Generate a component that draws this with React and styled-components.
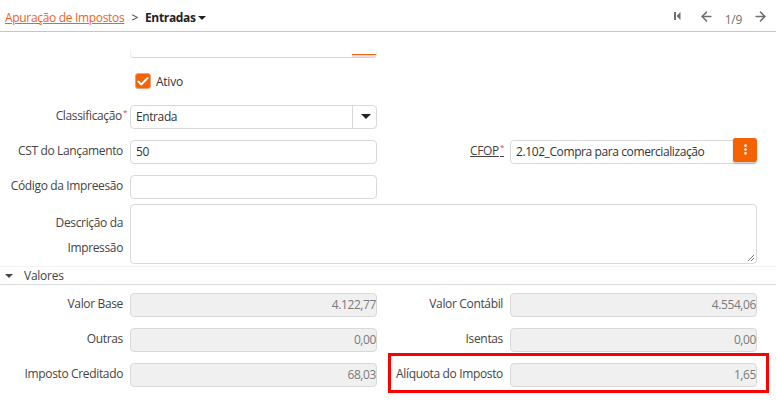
import React from "react";
import styled, { createGlobalStyle } from "styled-components";
import { Check, EllipsisVertical, ArrowLeft, ArrowRight } from "lucide-react";

const GlobalStyle = createGlobalStyle`
  html, body {
    margin: 0;
    padding: 0;
    background: #fff;
    overflow: hidden;
  }
  body {
    font-family: "Open Sans", "Noto Sans", "Liberation Sans", sans-serif;
    font-size: 12px;
    color: #333;
  }
`;

const Page = styled.div`
  position: relative;
  width: 776px;
  height: 402px;
  overflow: hidden;
`;

const Header = styled.header`
  height: 32px;
  box-sizing: border-box;
  display: flex;
  align-items: center;
  justify-content: space-between;
  padding: 4px 8px 0 5px;
  margin-bottom: 19px;
  border-bottom: 1px solid #c6c6c6;
`;

const Crumbs = styled.div`
  display: flex;
  align-items: center;
  font-size: 12px;
  letter-spacing: -0.32px;
`;

const CrumbLink = styled.a`
  color: #f4611a;
  text-decoration: underline;
`;

const CrumbSep = styled.span`
  margin: 0 7px 0 7px;
  color: #333;
`;

const CrumbCurrent = styled.span`
  font-weight: 700;
  color: #222;
`;

const Caret = styled.span`
  display: inline-block;
  width: 0;
  height: 0;
  margin-left: 2px;
  margin-top: ${(props) => props.$top || 0}px;
  border-left: ${(props) => props.$size || 4}px solid transparent;
  border-right: ${(props) => props.$size || 4}px solid transparent;
  border-top: ${(props) => (props.$size ? 5 : 4)}px solid ${(props) => props.$color || "#222"};
`;

const Pager = styled.div`
  display: flex;
  align-items: center;
  color: #6f6f6f;
  margin-top: -3px;
`;

const PagerIcon = styled.span`
  display: flex;
  margin-left: ${(props) => props.$left || 0}px;
`;

const PagerText = styled.span`
  margin: 6px 11px 0 11px;
  font-size: 12px;
  letter-spacing: -0.3px;
`;

const Form = styled.div`
  display: flex;
  flex-direction: column;
`;

const CutField = styled.div`
  margin-left: 130px;
  width: 247px;
  height: 7px;
  box-sizing: border-box;
  display: flex;
  justify-content: flex-end;
  align-items: flex-end;
  border-bottom: 1px solid #d6d6d6;
  border-left: 1px solid #ececec;
  border-right: 1px solid #ececec;
  border-radius: 0 0 4px 4px;
`;

const CutButtonEdge = styled.div`
  width: 24px;
  height: 6px;
  background: linear-gradient(#fff 0 3px, #f4611a 3px 4.5px, #e2e2e2 4.5px);
`;

const CheckRow = styled.div`
  display: flex;
  align-items: center;
  margin: 15px 0 0 135px;
  height: 16px;
`;

const CheckBox = styled.span`
  width: 16px;
  height: 16px;
  display: flex;
  align-items: center;
  justify-content: center;
  background: #f56202;
  border: 1px solid #e8a27a;
  box-sizing: border-box;
  border-radius: 3px;
  color: #fff;
`;

const CheckLabel = styled.span`
  margin-left: 5px;
  font-size: 12px;
  letter-spacing: -0.25px;
`;

const Row = styled.div`
  display: grid;
  grid-template-columns: 123px 247px 119px 247px;
  column-gap: 7px;
  align-items: center;
  height: ${(props) => props.$height || 24}px;
  margin-top: ${(props) => props.$top || 0}px;
`;

const Label = styled.label`
  text-align: right;
  font-size: 12px;
  letter-spacing: -0.35px;
  color: #444;
  white-space: nowrap;
  line-height: 25px;
  position: relative;
  top: -1px;
`;

const LinkLabel = styled(Label)`
  text-decoration: underline;
  margin-right: 3px;
`;

const CutLabel = styled(Label)`
  align-self: start;
  line-height: 17px;
  top: 1px;
  margin-right: -2px;
  letter-spacing: 0;
`;

const Required = styled.sup`
  color: #f0354a;
  font-size: 8px;
  line-height: 0;
  margin-left: 1px;
  margin-right: -4px;
`;

const Field = styled.div`
  box-sizing: border-box;
  height: ${(props) => props.$height || 24}px;
  border: 1px solid #d9d9d9;
  border-radius: 4px;
  background: ${(props) => (props.$disabled ? "#f0f0f0" : "#fff")};
  color: ${(props) => (props.$disabled ? "#7a7a7a" : "#333")};
  display: flex;
  align-items: center;
  justify-content: ${(props) => (props.$disabled ? "flex-end" : "flex-start")};
  padding-left: 5px;
  font-size: 12px;
  letter-spacing: -0.4px;
  position: relative;
`;

const SelectButton = styled.span`
  margin-left: auto;
  width: 23px;
  align-self: stretch;
  display: flex;
  align-items: center;
  justify-content: center;
  border-left: 1px solid #d9d9d9;
`;

const LookupButton = styled.button`
  position: absolute;
  right: -1px;
  top: -3px;
  width: 24px;
  height: 24px;
  padding: 0;
  border: none;
  border-radius: 2px 3px 3px 2px;
  background: #f56202;
  color: #fff;
  display: flex;
  align-items: center;
  justify-content: center;
  box-shadow: 0 2px 2px rgba(0, 0, 0, 0.2);
`;

const TextArea = styled(Field)`
  grid-column: 2 / 5;
  width: 627px;
`;

const Grip = styled.svg`
  position: absolute;
  right: 1px;
  bottom: 1px;
`;

const TwoLineLabel = styled(Label)`
  top: 1px;
`;

const SectionHeader = styled.div`
  display: flex;
  align-items: center;
  height: 19px;
  box-sizing: border-box;
  margin-top: 2px;
  padding-left: 3px;
  border-top: 1px solid #f2f2f2;
  border-bottom: 1px solid #dcdcdc;
  font-size: 12px;
  letter-spacing: -0.25px;
`;

const SectionTitle = styled.span`
  margin-left: 11px;
  color: #444;
`;

const Highlight = styled.div`
  position: absolute;
  left: 388px;
  top: 353px;
  width: 381px;
  height: 40px;
  box-sizing: border-box;
  border: 3px solid #ff0000;
`;

function FirstIcon() {
  return (
    <svg width="9" height="10" viewBox="0 0 9 10">
      <rect x="1" y="1" width="2" height="8" fill="#6f6f6f" />
      <path d="M7.5 1 L3.5 5 L7.5 9 Z" fill="#6f6f6f" />
    </svg>
  );
}

const values = [
  ["Valor Base", "4.122,77", "Valor Contábil", "4.554,06"],
  ["Outras", "0,00", "Isentas", "0,00"],
  ["Imposto Creditado", "68,03", "Alíquota do Imposto", "1,65"],
];

export default function App() {
  return (
    <Page>
      <GlobalStyle />
      <Header>
        <Crumbs>
          <CrumbLink>Apuração de Impostos</CrumbLink>
          <CrumbSep>&gt;</CrumbSep>
          <CrumbCurrent>Entradas</CrumbCurrent>
          <Caret $top={1} />
        </Crumbs>
        <Pager>
          <PagerIcon>
            <FirstIcon />
          </PagerIcon>
          <PagerIcon $left={17}>
            <ArrowLeft size={15} strokeWidth={2.4} />
          </PagerIcon>
          <PagerText>1/9</PagerText>
          <PagerIcon>
            <ArrowRight size={15} strokeWidth={2.4} />
          </PagerIcon>
        </Pager>
      </Header>
      <Form>
        <CutField>
          <CutButtonEdge />
        </CutField>
        <CheckRow>
          <CheckBox>
            <Check size={15} strokeWidth={3.5} />
          </CheckBox>
          <CheckLabel>Ativo</CheckLabel>
        </CheckRow>
        <Row $top={15}>
          <Label>
            Classificação<Required>*</Required>
          </Label>
          <Field>
            Entrada
            <SelectButton>
              <Caret $size={5.5} />
            </SelectButton>
          </Field>
        </Row>
        <Row $top={11}>
          <Label>CST do Lançamento</Label>
          <Field>50</Field>
          <LinkLabel>
            CFOP<Required>*</Required>
          </LinkLabel>
          <Field>
            2.102_Compra para comercialização
            <LookupButton>
              <EllipsisVertical size={13} strokeWidth={3} />
            </LookupButton>
          </Field>
        </Row>
        <Row $top={11}>
          <Label>Código da Impreesão</Label>
          <Field />
        </Row>
        <Row $top={6} $height={60}>
          <TwoLineLabel>
            Descrição da
            <br />
            Impressão
          </TwoLineLabel>
          <TextArea $height={60}>
            <Grip width="8" height="8" viewBox="0 0 8 8">
              <path d="M1 7 L7 1 M4 7 L7 4" stroke="#777" strokeWidth="1" />
            </Grip>
          </TextArea>
        </Row>
        <SectionHeader>
          <Caret $color="#444" />
          <SectionTitle>Valores</SectionTitle>
        </SectionHeader>
        {values.map((row, i) => (
          <Row key={row[0]} $top={i === 0 ? 7 : 11}>
            <Label>{row[0]}</Label>
            <Field $disabled>{row[1]}</Field>
            <Label>{row[2]}</Label>
            <Field $disabled>{row[3]}</Field>
          </Row>
        ))}
        <Row $top={11}>
          <CutLabel>Outras Despesas</CutLabel>
        </Row>
      </Form>
      <Highlight />
    </Page>
  );
}
